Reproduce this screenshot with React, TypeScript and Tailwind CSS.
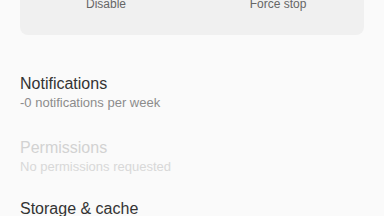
import React from "react";

type Item = {
  title: string;
  subtitle: string;
  disabled?: boolean;
  gap: string;
};

const ITEMS: Item[] = [
  { title: "Notifications", subtitle: "-0 notifications per week", gap: "mt-[39px]" },
  { title: "Permissions", subtitle: "No permissions requested", disabled: true, gap: "mt-[26px]" },
  { title: "Storage & cache", subtitle: "12.34 MB used in internal storage", gap: "mt-[23px]" },
];

const App = () => {
  return (
    <div
      className="w-[384px] h-[216px] overflow-hidden bg-[#fafafa]"
      style={{ fontFamily: '"Liberation Sans", Arial, sans-serif' }}
    >
      <div className="mx-5 -mt-[24px] pt-[20px] pb-[22px] rounded-[8px] bg-[#f0f0f0] grid grid-cols-2 text-[12px] leading-[17px] text-[#666666]">
        <div className="text-center">Disable</div>
        <div className="text-center">Force stop</div>
      </div>

      {ITEMS.map((item) => (
        <div key={item.title} className={`px-5 ${item.gap}`}>
          <div
            className={`text-[16px] leading-[20px] ${
              item.disabled ? "text-[#d2d2d2]" : "text-[#333333]"
            }`}
          >
            {item.title}
          </div>
          <div
            className={`text-[13px] leading-[18px] ${
              item.disabled ? "text-[#d8d8d8]" : "text-[#8c8c8c]"
            }`}
          >
            {item.subtitle}
          </div>
        </div>
      ))}
    </div>
  );
};

export default App;
